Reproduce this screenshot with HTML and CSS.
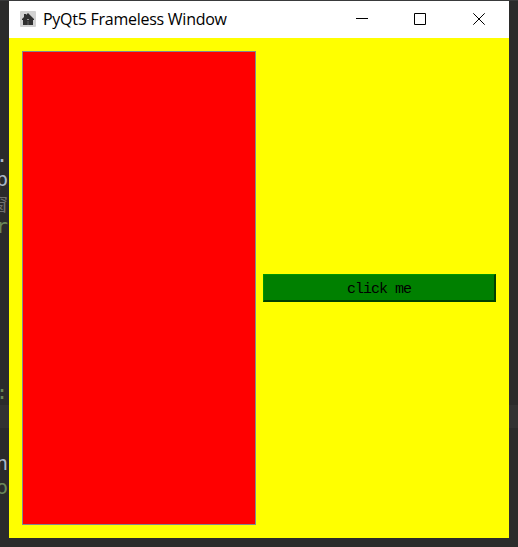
FILE: index.html
```html
<!DOCTYPE html>
<html lang="en">
<head>
<meta charset="utf-8">
<title>PyQt5 Frameless Window</title>
<link rel="stylesheet" href="styles.css">
</head>
<body>
<div class="editor">
  <div class="code">
    <div class="line"></div><div class="line"></div><div class="line"></div>
    <div class="line"></div><div class="line"></div><div class="line"></div>
    <div class="line"><span>.</span></div>
    <div class="line"><span>p</span></div>
    <div class="line comment"><span>窗</span></div>
    <div class="line string"><span>r</span></div>
    <div class="line"></div><div class="line"></div><div class="line"></div>
    <div class="line"></div><div class="line"></div><div class="line"></div>
    <div class="line string"><span>:</span></div>
    <div class="line current"></div>
    <div class="line"></div>
    <div class="line"><span>n</span></div>
    <div class="line string"><span>o</span></div>
  </div>
  <div class="window">
    <header class="titlebar">
      <svg class="app-icon" width="16" height="16" viewBox="0 0 16 16">
        <rect width="16" height="16" rx="1" fill="#d2d2d2"/>
        <path d="M8 2 14 8v1h-1v5H9v-4H7v4H3V9H2V8l2-2V3h2v1z" fill="#303030"/>
        <path d="M7 8h2v1H7z" fill="#999"/>
        <path d="M7 10h2v4H7z" fill="#484848"/>
      </svg>
      <h1 class="title">PyQt5 Frameless Window</h1>
      <div class="controls">
        <svg width="12" height="12" viewBox="0 0 12 12"><path d="M0 5.5h12"/></svg>
        <svg width="12" height="12" viewBox="0 0 12 12"><path d="M.5.5h11v11H.5z"/></svg>
        <svg width="12" height="12" viewBox="0 0 12 12"><path d="M.3.3l11.4 11.4M11.7.3.3 11.7"/></svg>
      </div>
    </header>
    <main class="content">
      <div class="panel"></div>
      <button class="button" type="button"><span>click me</span></button>
    </main>
  </div>
</div>
</body>
</html>
```
FILE: styles.css
```css
* { box-sizing: border-box; }

body { margin: 0; background: #2b2b2b; }

.editor {
  position: relative;
  width: 518px;
  height: 547px;
  overflow: hidden;
  padding: 1px 9px;
  background: #2b2b2b;
  box-shadow: inset 0 1px #393a3b;
}

.code {
  position: absolute;
  inset: 2px 0 0;
  font: 20px/23.7px "DejaVu Sans Mono", monospace;
  color: #a9b7c6;
}

.line {
  display: flex;
  justify-content: flex-end;
  height: 23.7px;
  padding-right: 510px;
  white-space: pre;
}

.comment { color: #707070; font-size: 18px; font-family: "Noto Sans CJK SC", sans-serif; }
.string { color: #6a8759; }
.current { background: #323232; }

.window {
  position: relative;
  display: flex;
  flex-direction: column;
  width: 500px;
  height: 537px;
  background: #ff0;
}

.titlebar {
  display: flex;
  align-items: center;
  height: 37px;
  padding: 0 24px 0 11px;
  background: #fff;
}

.app-icon { margin-bottom: 1px; }

.title {
  margin: 0 auto 1px 7px;
  font: 400 16px/20px "Open Sans", "Noto Sans", sans-serif;
  letter-spacing: -0.26px;
  color: #000;
}

.controls { display: flex; gap: 46px; height: 12px; margin-bottom: 1px; }
.controls svg { fill: none; stroke: #000; stroke-width: 1; }
.controls svg:last-child { margin-left: 1px; }

.content {
  flex: 1;
  display: grid;
  grid-template-columns: 234px 233px;
  gap: 7px;
  align-items: center;
  padding: 13px;
}

.panel {
  height: 474px;
  border: 1px solid #828790;
  background: #f00;
}

.button {
  height: 28px;
  padding: 4px 0 0;
  border: solid;
  border-width: 1px 2px 2px 1px;
  border-color: #009600 #004000 #004000 #009600;
  background: #008000;
  color: #000;
  font: 15px/20px "Liberation Mono", monospace;
  letter-spacing: -1px;
}
```
